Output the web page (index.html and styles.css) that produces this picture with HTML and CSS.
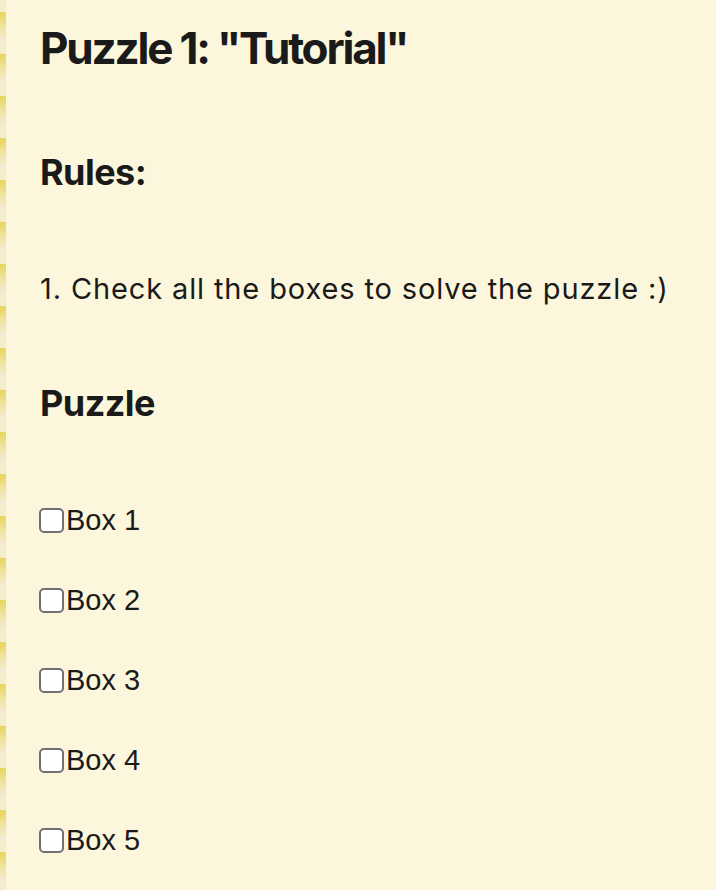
FILE: index.html
```html
<!DOCTYPE html>
<html lang="en">
<head>
<meta charset="utf-8">
<title>Puzzle 1</title>
<link rel="stylesheet" href="styles.css">
</head>
<body>
<main class="page">
  <h1 class="title">Puzzle 1: "Tutorial"</h1>
  <h2 class="section">Rules:</h2>
  <p class="rule">1. Check all the boxes to solve the puzzle :)</p>
  <h2 class="section">Puzzle</h2>
  <div class="boxes">
    <label class="box"><input type="checkbox" class="check">Box 1</label>
    <label class="box"><input type="checkbox" class="check">Box 2</label>
    <label class="box"><input type="checkbox" class="check">Box 3</label>
    <label class="box"><input type="checkbox" class="check">Box 4</label>
    <label class="box"><input type="checkbox" class="check">Box 5</label>
  </div>
</main>
</body>
</html>
```
FILE: styles.css
```css
html, body {
  margin: 0;
  padding: 0;
}
body {
  min-height: 890px;
  background:
    repeating-linear-gradient(to bottom,
      #f3eccd 0px, #f3eccd 12px,
      #e8d55a 12px, #efe3a0 26px, #f3ecd6 42px) left top / 6px 100% no-repeat,
    #fcf7dc;
  color: #1a1a1a;
  font-family: Inter, "Liberation Sans", sans-serif;
}
.page {
  display: flex;
  flex-direction: column;
  padding: 20px 0 0 40px;
}
.title {
  margin: 0;
  font-size: 44px;
  line-height: 56px;
  font-weight: 700;
  letter-spacing: -0.05em;
}
.section {
  margin: 76px 0 0;
  font-size: 36px;
  line-height: 40px;
  font-weight: 700;
  letter-spacing: -0.015em;
}
.rule {
  margin: 79px 0 0;
  font-size: 29px;
  line-height: 36px;
  font-weight: 400;
  letter-spacing: 0.03em;
}
.boxes {
  display: flex;
  flex-direction: column;
  gap: 40px;
  margin-top: 77px;
}
.box {
  display: flex;
  align-items: center;
  height: 40px;
  font-family: "Liberation Sans", Arial, sans-serif;
  font-size: 29px;
}
.check {
  appearance: none;
  -webkit-appearance: none;
  box-sizing: border-box;
  width: 25px;
  height: 25px;
  margin: 0 2px 0 -1px;
  border: 2px solid #707070;
  border-radius: 5px;
  background: #fff;
}
```
